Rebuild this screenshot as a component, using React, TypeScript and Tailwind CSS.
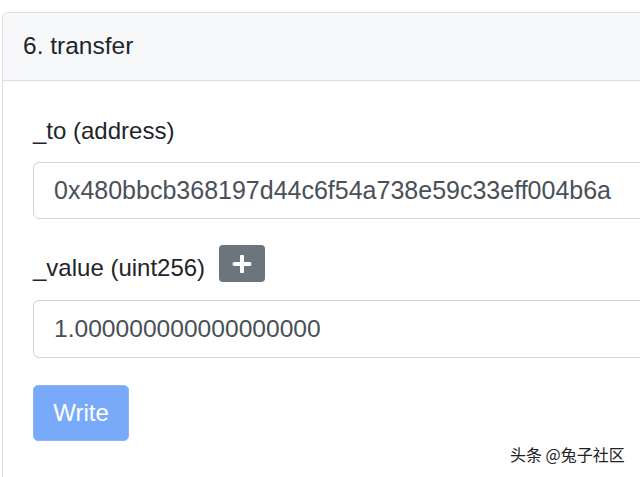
import React from "react";

export default function App() {
  return (
    <div className="relative w-[640px] h-[477px] overflow-hidden bg-white" style={{ fontFamily: '"Liberation Sans", Arial, sans-serif' }}>
      <div className="ml-[2px] mt-[12px] w-[720px] rounded-tl-[6px] border border-[#dedede]">
        <div className="h-[68px] bg-[#f7f8f9] border-b border-[#dedede] rounded-tl-[6px] pl-[20px] flex items-center">
          <span className="text-[24.5px] text-[#212529] leading-none">6. transfer</span>
        </div>
        <div className="pl-[30px] pt-[32px] pb-[40px]">
          <div className="text-[24px] leading-[36px] text-[#212529]">_to (address)</div>
          <div className="mt-[13px] h-[57px] w-[660px] border border-[#ced4da] rounded-[6px] flex items-center pl-[20px] text-[25px] text-[#495057]">
            0x480bbcb368197d44c6f54a738e59c33eff004b6a
          </div>
          <div className="mt-[26px] flex items-start">
            <div className="mt-[5px] text-[24px] leading-[36px] text-[#212529]">_value (uint256)</div>
            <div className="ml-[14px] w-[46px] h-[37px] rounded-[4px] bg-[#6c757d] flex items-center justify-center">
              <svg width="20" height="18" viewBox="0 0 20 18">
                <path d="M10 1.5V16.5M2.5 9H17.5" stroke="white" strokeWidth="4" strokeLinecap="round" />
              </svg>
            </div>
          </div>
          <div className="mt-[14px] h-[58px] w-[660px] border border-[#ced4da] rounded-[6px] flex items-center pl-[20px] text-[24.6px] text-[#495057]">
            1.000000000000000000
          </div>
          <div className="mt-[27px] w-[96px] h-[56px] rounded-[5px] bg-[#79aafa] border border-[#8cb6fb] flex items-center justify-center text-[24px] text-white">
            Write
          </div>
        </div>
      </div>
      <div
        className="absolute left-[510px] top-[443px] text-[16px] text-[#222] leading-[22px]"
        style={{ fontFamily: '"Noto Sans CJK SC", sans-serif', textShadow: "0 0 2px #fff, 0 0 2px #fff" }}
      >
        头条 @兔子社区
      </div>
    </div>
  );
}
